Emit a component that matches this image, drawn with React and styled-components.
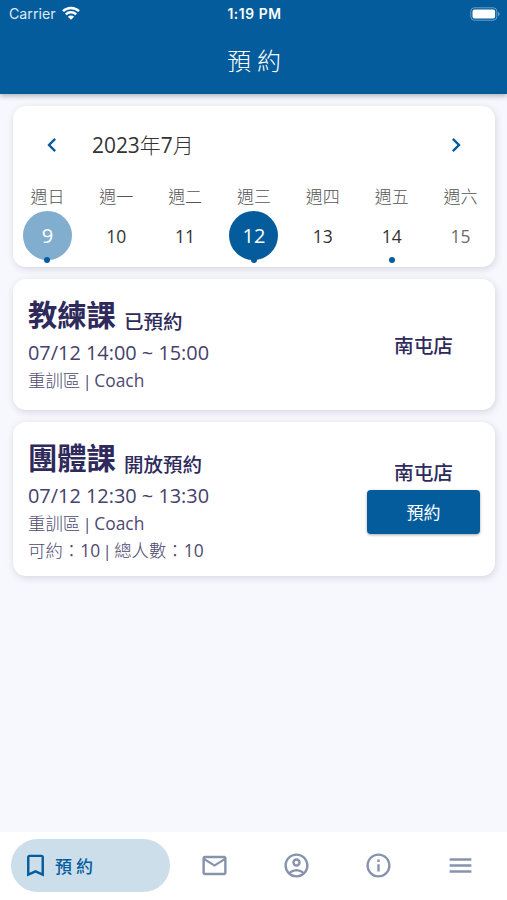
import React, { useState } from "react"
import styled, { createGlobalStyle } from "styled-components"
import {
  MdBookmarkBorder,
  MdChevronLeft,
  MdChevronRight,
  MdInfoOutline,
  MdMailOutline,
  MdMenu,
  MdOutlineAccountCircle,
} from "react-icons/md"

const GlobalStyle = createGlobalStyle`
  * {
    box-sizing: border-box;
  }
  body {
    margin: 0;
    font-family: "Open Sans", "Noto Sans CJK TC", sans-serif;
  }
  button {
    border: none;
    padding: 0;
    background: transparent;
    font-family: inherit;
    cursor: pointer;
  }
`

const Container = styled.div`
  width: 100%;
  height: 100vh;
  display: flex;
  flex-direction: column;
  background-color: #f7f8fd;
  overflow: hidden;
`

const Header = styled.header`
  height: 94px;
  flex-shrink: 0;
  background-color: #045c9d;
  color: white;
  box-shadow: 0 2px 5px rgba(40, 40, 70, 0.35);
`

const StatusBar = styled.div`
  height: 28px;
  padding: 0 7px 0 9px;
  display: grid;
  grid-template-columns: 1fr auto 1fr;
  align-items: center;
  font-family: Inter, sans-serif;
  font-size: 14.2px;
`

const Carrier = styled.div`
  display: flex;
  align-items: center;
  gap: 6px;
  color: #dcebf6;
  padding-bottom: 2px;
`

const Clock = styled.div`
  font-size: 13.8px;
  font-weight: 600;
  letter-spacing: 0.6px;
`

const BatteryIcon = styled.svg`
  justify-self: end;
  margin-bottom: 1px;
`

const Title = styled.h1`
  margin: 0;
  height: 66px;
  display: flex;
  align-items: center;
  justify-content: center;
  font-size: 24px;
  font-weight: 300;
  letter-spacing: 6px;
  padding: 0 0 4px 7px;
`

const Content = styled.main`
  flex: 1;
  padding: 12px 12px 0 13px;
  display: flex;
  flex-direction: column;
  gap: 12px;
`

const Card = styled.section`
  border-radius: 13px;
  background-color: white;
  box-shadow: 1px 2px 7px rgba(50, 50, 90, 0.17);
`

const Calendar = styled(Card)`
  height: 161px;
`

const MonthRow = styled.div`
  height: 78px;
  padding: 0 25px;
  display: flex;
  align-items: center;
`

const ArrowButton = styled.button`
  width: 28px;
  height: 28px;
  color: #045c9d;
  font-size: 28px;
  line-height: 0;
`

const Month = styled.div`
  flex: 1;
  padding: 0 0 2px 26px;
  font-size: 20.9px;
  color: #333;
`

const Light = styled.span`
  font-weight: 300;
`

const Week = styled.div`
  display: grid;
  grid-template-columns: repeat(7, 1fr);
`

const Weekday = styled.div`
  height: 27px;
  line-height: 25px;
  text-align: center;
  font-size: 17px;
  font-weight: 300;
  color: #555;
`

const getDayBackground = ({ $state }) => {
  if ($state === "selected") return "#045c9d"
  if ($state === "today") return "#81adce"
  return "transparent"
}

const getDayColor = ({ $state }) => {
  if ($state === "selected" || $state === "today") return "white"
  if ($state === "muted") return "#6b6b6b"
  return "#333"
}

const Day = styled.button`
  position: relative;
  justify-self: center;
  width: 49px;
  height: 49px;
  border-radius: 50%;
  background-color: ${getDayBackground};
  color: ${getDayColor};
  font-size: ${({ $state }) =>
    $state === "selected" || $state === "today" ? "20px" : "17.5px"};
`

const Dot = styled.span`
  position: absolute;
  left: 50%;
  bottom: -3px;
  width: 6px;
  height: 6px;
  margin-left: -3px;
  border-radius: 50%;
  background-color: #045c9d;
`

const CourseCard = styled(Card)`
  height: ${({ $height }) => $height}px;
  padding: 14px 15px;
  display: flex;
  align-items: flex-start;
  justify-content: space-between;
  color: #2e2a5c;
`

const Heading = styled.div`
  height: 45px;
  display: flex;
  align-items: center;
  gap: 8px;
  line-height: 43px;
`

const CourseName = styled.h2`
  margin: 0;
  font-size: 29.3px;
  font-weight: 600;
`

const Status = styled.span`
  padding-top: 12px;
  font-size: 19.5px;
  font-weight: 500;
`

const Time = styled.div`
  height: 29px;
  line-height: 29px;
  font-size: 19.9px;
  color: #45416c;
`

const Detail = styled.div`
  height: 27px;
  display: flex;
  line-height: 27px;
  font-size: 17.4px;
  color: #4e4a70;
`

const Divider = styled.span`
  width: 1.5px;
  height: 17px;
  margin: 6px 6.3px 0;
  font-size: 16px;
  line-height: 16px;
  display: flex;
  justify-content: center;
`

const Side = styled.div`
  width: 113px;
  align-self: center;
  display: flex;
  flex-direction: column;
  align-items: center;
`

const Branch = styled.div`
  height: 36px;
  line-height: 37px;
  font-size: 19.7px;
  font-weight: 500;
`

const BookButton = styled.button`
  width: 113px;
  height: 44px;
  margin-bottom: 11px;
  border-radius: 4px;
  background-color: #045c9d;
  color: white;
  font-size: 17px;
  box-shadow: 0 1px 3px rgba(0, 0, 0, 0.35);
`

const Nav = styled.nav`
  height: 68px;
  padding: 7px 6px 8px 11px;
  display: flex;
  align-items: center;
  background-color: white;
`

const ActiveTab = styled.button`
  width: 159px;
  height: 53px;
  margin-right: 4px;
  padding-left: 10px;
  display: flex;
  align-items: center;
  gap: 5px;
  border-radius: 27px;
  background-color: #cddeeb;
  color: #045c9d;
  font-size: 29px;
`

const TabLabel = styled.span`
  font-size: 17px;
  font-weight: 500;
  letter-spacing: 4px;
`

const Tab = styled.button`
  flex: 1;
  display: flex;
  justify-content: center;
  color: #8792ad;
  font-size: 29px;
`

const days = [
  { label: "週日", date: 9, state: "today", dot: true },
  { label: "週一", date: 10 },
  { label: "週二", date: 11 },
  { label: "週三", date: 12, dot: true },
  { label: "週四", date: 13 },
  { label: "週五", date: 14, dot: true },
  { label: "週六", date: 15, state: "muted" },
]

const courses = [
  {
    name: "教練課",
    status: "已預約",
    time: "07/12 14:00 ~ 15:00",
    area: "重訓區",
    coach: "Coach",
    branch: "南屯店",
    height: 131,
  },
  {
    name: "團體課",
    status: "開放預約",
    time: "07/12 12:30 ~ 13:30",
    area: "重訓區",
    coach: "Coach",
    branch: "南屯店",
    height: 154,
    open: true,
    available: 10,
    total: 10,
  },
]

const tabs = [MdMailOutline, MdOutlineAccountCircle, MdInfoOutline, MdMenu]

function Wifi() {
  return (
    <svg width="18" height="14" viewBox="0 0 18 14" fill="none">
      <path d="M1 5.2a11.5 11.5 0 0 1 16 0" stroke="white" strokeWidth="2.5" />
      <path d="M3.8 8.4a7.5 7.5 0 0 1 10.4 0" stroke="white" strokeWidth="2.4" />
      <path d="M9 13.8 5.9 10.7a4.4 4.4 0 0 1 6.2 0z" fill="white" />
    </svg>
  )
}

function Battery() {
  return (
    <BatteryIcon width="30" height="14" viewBox="0 0 30 14" fill="none">
      <rect x="0.8" y="0.8" width="26" height="12.4" rx="3.6" stroke="#6c9fc9" />
      <rect x="2.5" y="2.5" width="22.6" height="9" rx="2" fill="white" />
      <path d="M28 5v4q1.7-.6 1.7-2T28 5z" fill="#6c9fc9" />
    </BatteryIcon>
  )
}

export default function App() {
  const [selected, setSelected] = useState(12)

  return (
    <>
      <GlobalStyle />
      <Container>
        <Header>
          <StatusBar>
            <Carrier>
              Carrier
              <Wifi />
            </Carrier>
            <Clock>1:19 PM</Clock>
            <Battery />
          </StatusBar>
          <Title>預約</Title>
        </Header>
        <Content>
          <Calendar>
            <MonthRow>
              <ArrowButton>
                <MdChevronLeft />
              </ArrowButton>
              <Month>
                2023<Light>年</Light>7<Light>月</Light>
              </Month>
              <ArrowButton>
                <MdChevronRight />
              </ArrowButton>
            </MonthRow>
            <Week>
              {days.map((day) => (
                <Weekday key={day.label}>{day.label}</Weekday>
              ))}
              {days.map((day) => (
                <Day
                  key={day.date}
                  $state={day.date === selected ? "selected" : day.state}
                  onClick={() => setSelected(day.date)}
                >
                  {day.date}
                  {day.dot && <Dot />}
                </Day>
              ))}
            </Week>
          </Calendar>
          {courses.map((course) => (
            <CourseCard key={course.name} $height={course.height}>
              <div>
                <Heading>
                  <CourseName>{course.name}</CourseName>
                  <Status>{course.status}</Status>
                </Heading>
                <Time>{course.time}</Time>
                <Detail>
                  <Light>{course.area}</Light>
                  <Divider>|</Divider>
                  {course.coach}
                </Detail>
                {course.open && (
                  <Detail>
                    <Light>可約：</Light>
                    {course.available}
                    <Divider>|</Divider>
                    <Light>總人數：</Light>
                    {course.total}
                  </Detail>
                )}
              </div>
              <Side>
                <Branch>{course.branch}</Branch>
                {course.open && <BookButton>預約</BookButton>}
              </Side>
            </CourseCard>
          ))}
        </Content>
        <Nav>
          <ActiveTab>
            <MdBookmarkBorder />
            <TabLabel>預約</TabLabel>
          </ActiveTab>
          {tabs.map((Icon, index) => (
            <Tab key={index}>
              <Icon />
            </Tab>
          ))}
        </Nav>
      </Container>
    </>
  )
}
